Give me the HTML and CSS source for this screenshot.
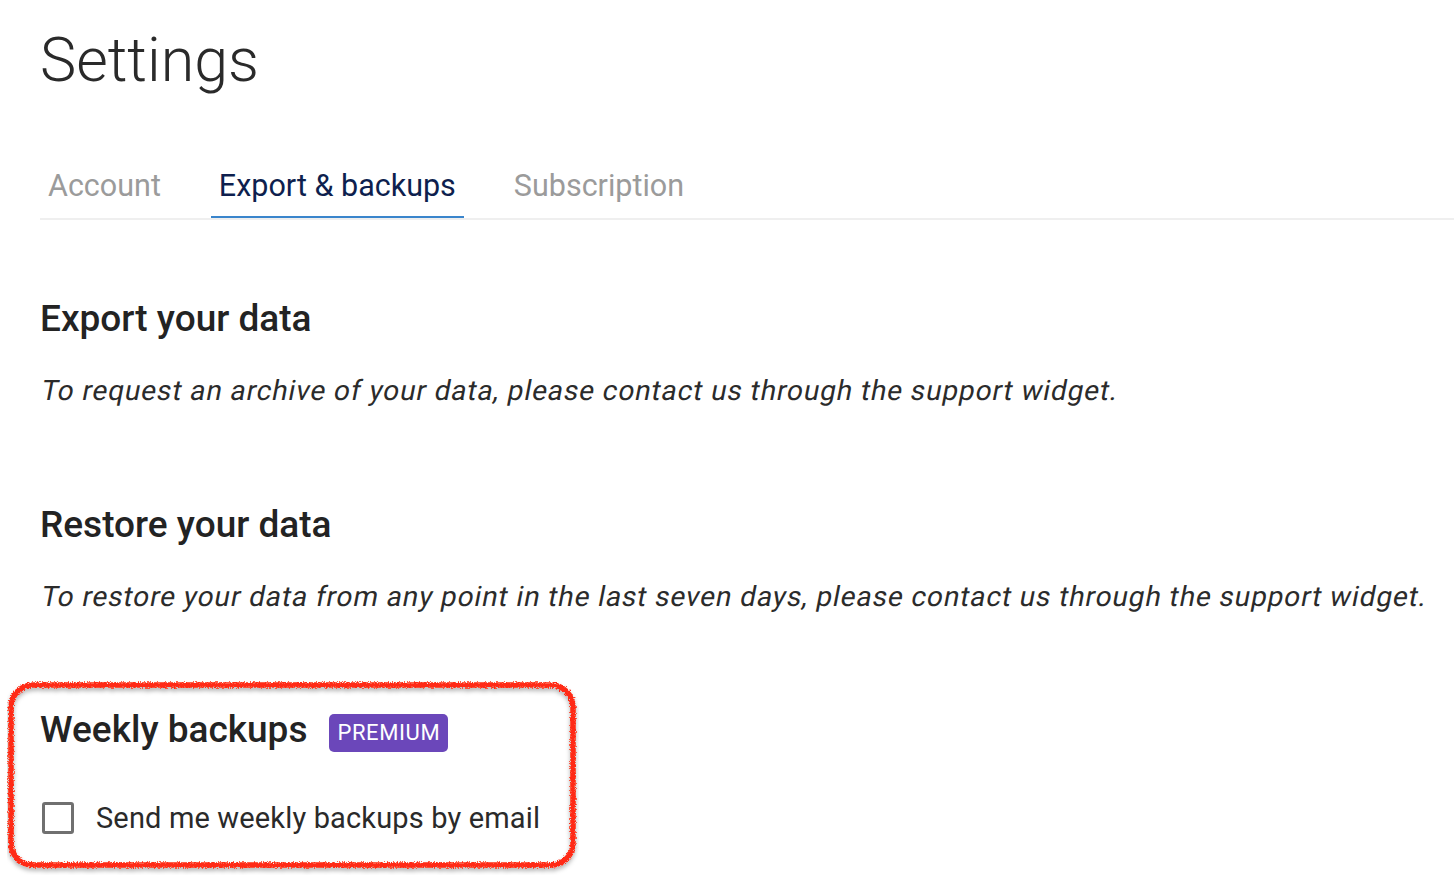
FILE: index.html
```html
<!DOCTYPE html>
<html lang="en">

<head>
    <meta charset="UTF-8">
    <meta name="viewport" content="width=device-width, initial-scale=1.0">
    <title>Settings</title>
    <link rel="stylesheet" href="styles.css">
</head>

<body>
    <div class="page">
        <h1 class="title">Settings</h1>

        <ul class="tabs">
            <li class="tab">Account</li>
            <li class="tab active">Export &amp; backups</li>
            <li class="tab">Subscription</li>
        </ul>

        <section class="block first">
            <h2>Export your data</h2>
            <p class="note"><span>To request an archive of your data, please contact us through the support widget.</span></p>
        </section>

        <section class="block">
            <h2>Restore your data</h2>
            <p class="note"><span>To restore your data from any point in the last seven days, please contact us through the support widget.</span></p>
        </section>

        <section class="highlight">
            <!-- hand drawn marker round the premium block -->
            <svg class="marker" width="572" height="194" viewBox="0 0 572 194">
                <defs>
                    <filter id="rough" x="-5%" y="-10%" width="110%" height="125%">
                        <feTurbulence type="fractalNoise" baseFrequency="0.8" numOctaves="3" seed="7" result="noise" />
                        <feDisplacementMap in="SourceGraphic" in2="noise" scale="4.5" xChannelSelector="R" yChannelSelector="G" result="rough" />
                        <feGaussianBlur in="rough" stdDeviation="2" result="blur" />
                        <feOffset in="blur" dx="0" dy="3" result="shift" />
                        <feColorMatrix in="shift" type="matrix" values="0 0 0 0 0  0 0 0 0 0  0 0 0 0 0  0 0 0 0.3 0" result="shadow" />
                        <feMerge>
                            <feMergeNode in="shadow" />
                            <feMergeNode in="rough" />
                        </feMerge>
                    </filter>
                </defs>
                <rect x="4" y="4" width="562" height="180" rx="22" ry="22" fill="none" stroke="#ff2c14" stroke-width="5.5" filter="url(#rough)" />
            </svg>

            <div class="heading-row">
                <h2>Weekly backups</h2>
                <span class="badge">PREMIUM</span>
            </div>

            <label class="check">
                <span class="box"></span>
                Send me weekly backups by email
            </label>
        </section>
    </div>
</body>

</html>
```

FILE: styles.css
```css
html,
body {
    height: 100%;
}

body {
    margin: 0;
    background: #fff;
    color: #262626;
    font-family: Roboto, 'Liberation Sans', sans-serif;
}

.page {
    padding: 30px 0 0 40px;
}

.title {
    margin: 0;
    font-size: 61px;
    font-weight: 300;
    line-height: 60px;
    color: #2a2a2a;
}

.tabs {
    display: flex;
    gap: 42px;
    margin: 78px 0 0;
    padding: 0;
    list-style: none;
    border-bottom: 2px solid #efefef;
}

.tab {
    padding: 0 8px 12px;
    font-size: 30.5px;
    line-height: 36px;
    color: #9b9b9b;
    border-bottom: 2px solid transparent;
}

.tab.active {
    color: #0e1f4e;
    border-bottom-color: #3a85cc;
}

h2 {
    margin: 0;
    font-size: 37px;
    font-weight: 500;
    line-height: 44px;
    color: #232323;
}

.block {
    margin-top: 94px;
}

.block.first {
    margin-top: 77px;
}

.note {
    margin: 32px 0 0;
    font-size: 28px;
    line-height: 36px;
    letter-spacing: 0.88px;
    color: #2b2b2b;
}

/* slanted regular face, like the browser's fake italic */
.note span {
    display: inline-block;
    transform: skewX(-11deg);
    transform-origin: 0 75%;
}

.highlight {
    position: relative;
    width: 504px;
    height: 128px;
    margin: 67px 0 0 -33px;
    padding: 26px 33px 32px;
}

.marker {
    position: absolute;
    left: 0;
    top: -1px;
    pointer-events: none;
}

.heading-row {
    display: flex;
    align-items: center;
    gap: 22px;
}

.badge {
    margin-top: 6px;
    padding: 0 8px;
    height: 38px;
    line-height: 38px;
    border-radius: 5px;
    background-color: #6b47ba;
    color: #fff;
    font-size: 22px;
    letter-spacing: 0.6px;
}

.check {
    display: flex;
    align-items: center;
    gap: 22px;
    margin-top: 48px;
    font-size: 29px;
    line-height: 36px;
    letter-spacing: 0.15px;
    color: #2a2a2a;
}

.box {
    width: 26px;
    height: 26px;
    margin-left: 2px;
    border: 3px solid #707070;
    border-radius: 3px;
}
```
